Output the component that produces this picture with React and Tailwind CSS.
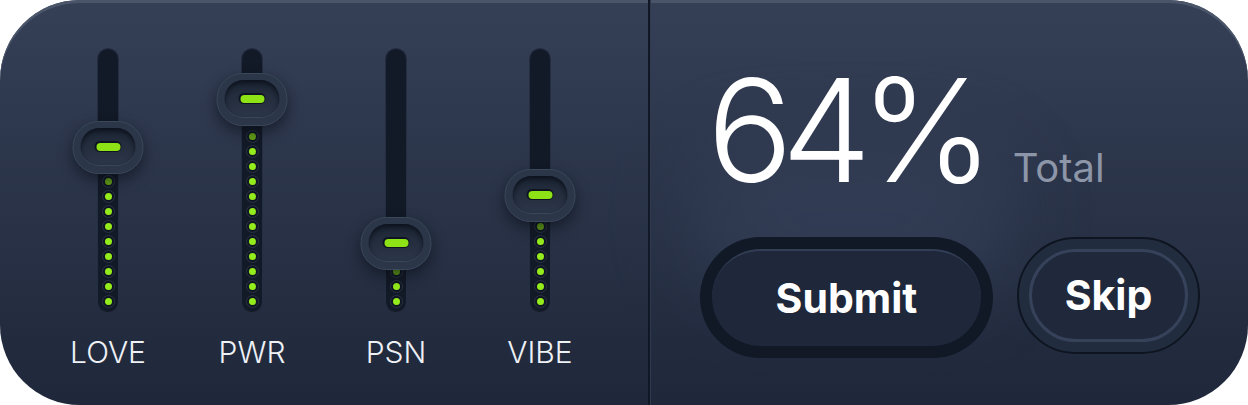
import React from 'react';

const sliders = [
  { label: 'LOVE', knob: 99, dots: 9 },
  { label: 'PWR', knob: 51, dots: 12 },
  { label: 'PSN', knob: 195, dots: 3 },
  { label: 'VIBE', knob: 147, dots: 6 },
];

const Dot = ({ dim }) => (
  <div className="h-[15px] flex items-center justify-center">
    <div className="w-[13px] h-[13px] rounded-full bg-[#101722] border border-[#2a3448] flex items-center justify-center">
      <div className={`w-[7px] h-[7px] rounded-full ${dim ? 'bg-[#67a617]' : 'bg-[#95ec1c]'}`} />
    </div>
  </div>
);

const Slider = ({ label, knob, dots }) => (
  <div className="w-[144px] flex flex-col items-center">
    <div className="relative w-[22px] h-[265px] rounded-full bg-[#131a27] border border-[#252f43] flex flex-col justify-end pb-[3px]">
      {Array.from({ length: dots }).map((_, i) => (
        <Dot key={i} dim={i === 0} />
      ))}
      {/* knob sits over the track */}
      <div
        className="absolute left-1/2 -translate-x-1/2 w-[71px] h-[53px] rounded-[26px] bg-[#2b3649] border border-[#3b475b] shadow-[0_6px_14px_rgba(8,12,20,0.55)] flex items-center justify-center"
        style={{ top: knob - 26.5 - 1 }}
      >
        <div className="w-[55px] h-[38px] rounded-[19px] bg-gradient-to-b from-[#1c2534] to-[#2c3749] shadow-[inset_0_3px_5px_rgba(6,10,18,0.7)] border-b border-[#3a465a] flex items-center justify-center">
          <div className="w-[27px] h-[11px] rounded-full bg-[#0f1520] flex items-center justify-center">
            <div className="w-[24px] h-[8px] rounded-full bg-[#8ee316]" />
          </div>
        </div>
      </div>
    </div>
    <div className="mt-[24px] text-[30px] leading-none font-light text-[#eef1f6]">{label}</div>
  </div>
);

export default function App() {
  return (
    <div className="w-[1248px] h-[405px] bg-white" style={{ fontFamily: 'Inter, "Noto Sans", sans-serif' }}>
      <div className="relative w-full h-full rounded-[80px] overflow-hidden bg-gradient-to-b from-[#353f56] to-[#1f283a] shadow-[inset_0_3px_0_#4a556a] flex">
        <div className="w-[648px] h-full px-[36px] pt-[48px] flex">
          {sliders.map((s) => (
            <Slider key={s.label} {...s} />
          ))}
        </div>
        <div className="w-[3px] h-full bg-[#101826] border-r border-[#2f3a4f]" />
        <div className="relative flex-1 pl-[49px] pt-[58px]">
          <div className="absolute left-[40px] top-[150px] w-[320px] h-[140px] rounded-full bg-[#3a4661] opacity-50 blur-2xl" />
          <div className="relative flex items-baseline ml-[7px]">
            <span className="text-[143px] leading-none font-light text-white tracking-[-0.08em]">64%</span>
            <span className="ml-[30px] text-[40px] leading-none text-[#8c96a8]">Total</span>
          </div>
          <div className="relative mt-[36px] flex items-start">
            <div className="w-[293px] h-[121px] rounded-full bg-[#111927] p-[12px]">
              <div className="w-full h-full rounded-full bg-[#1e283a] border-t-2 border-[#323e55] flex items-center justify-center text-[41px] font-bold text-white">
                Submit
              </div>
            </div>
            <div className="ml-[24px] w-[183px] h-[117px] rounded-full border-2 border-[#0e1521] bg-[#222c3f] p-[10px]">
              <div className="w-full h-full rounded-full border-[3px] border-[#36425a] bg-[#1f293b] flex items-center justify-center text-[41px] font-bold text-white">
                Skip
              </div>
            </div>
          </div>
        </div>
      </div>
    </div>
  );
}
